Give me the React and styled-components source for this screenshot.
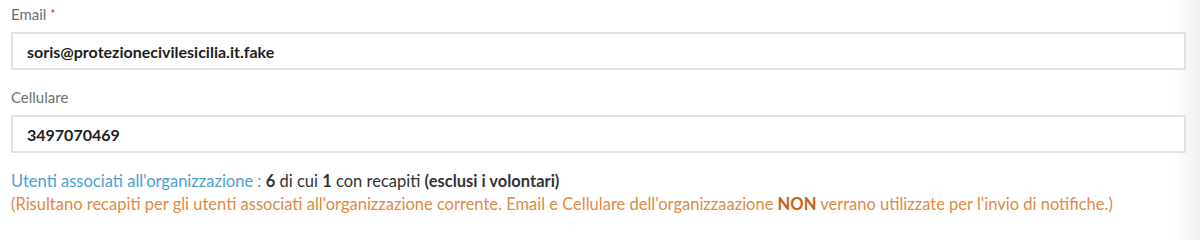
import React from "react";
import styled, { createGlobalStyle } from "styled-components";

const Global = createGlobalStyle`
  html, body { margin: 0; padding: 0; height: 100%; }
  body {
    font-family: "Lato", "Noto Sans", sans-serif;
    background: linear-gradient(to right, #ffffff calc(100% - 28px), #f1f1f1 100%);
  }
`;

const Wrapper = styled.div`
  padding: 4px 14px 0 11px;
`;

const Group = styled.div`
  margin-bottom: 17px;
`;

const Label = styled.label`
  display: block;
  font-size: 15px;
  line-height: 20px;
  color: #707070;
  margin-bottom: 8px;
`;

const Required = styled.span`
  color: #d0021b;
  font-size: 11px;
  vertical-align: top;
  margin-left: 4px;
`;

const Input = styled.input`
  display: block;
  box-sizing: border-box;
  width: 100%;
  height: 38px;
  border: 2px solid #dfe2e8;
  background: #fff;
  padding: 0 14px;
  font-family: inherit;
  font-size: 16px;
  font-weight: 700;
  color: #1e1e1e;
  outline: none;
`;

const Info = styled.div`
  margin-top: 16px;
  font-size: 16.5px;
  line-height: 23px;
  color: #333;
`;

const Accent = styled.span`
  color: #4d9fd2;
`;

const Note = styled.div`
  color: #e08a44;
`;

const Strong = styled.b`
  font-weight: 700;
  color: ${(p) => p.$color || "inherit"};
`;

export default function App() {
  return (
    <>
      <Global />
      <Wrapper>
        <Group>
          <Label>
            Email<Required>*</Required>
          </Label>
          <Input defaultValue="soris@protezionecivilesicilia.it.fake" />
        </Group>
        <Group>
          <Label>Cellulare</Label>
          <Input defaultValue="3497070469" />
        </Group>
        <Info>
          <div>
            <Accent>Utenti associati all'organizzazione : </Accent>
            <Strong>6</Strong> di cui <Strong>1</Strong> con recapiti{" "}
            <Strong>(esclusi i volontari)</Strong>
          </div>
          <Note>
            (Risultano recapiti per gli utenti associati all'organizzazione corrente. Email e
            Cellulare dell'organizzaazione <Strong $color="#c8620c">NON</Strong> verrano
            utilizzate per l'invio di notifiche.)
          </Note>
        </Info>
      </Wrapper>
    </>
  );
}
